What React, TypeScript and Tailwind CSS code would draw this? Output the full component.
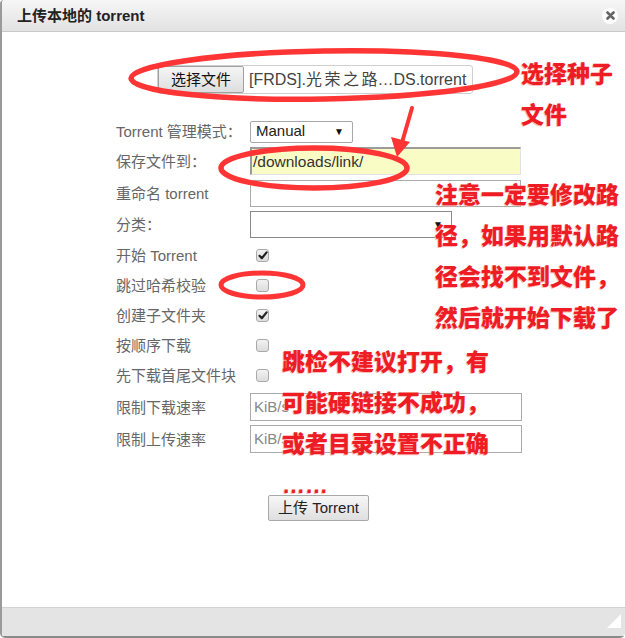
import React from "react";

const labelCls = "w-[134px] shrink-0 text-[15px] text-[#666] leading-none";
const redText =
  "absolute font-black text-[23px] leading-[41px] text-[#ee1c24] whitespace-nowrap [text-shadow:-1px_1px_0_rgba(255,170,170,0.8)]";

function Check({ checked }: { checked?: boolean }) {
  return (
    <div className="ml-[6px] w-[13px] h-[13px] rounded-[3px] border border-[#a9a9a9] bg-gradient-to-b from-[#f2f2f2] to-[#dcdcdc] flex items-center justify-center">
      {checked && (
        <svg width="10" height="9" viewBox="0 0 10 9">
          <path d="M1.5 4.8 L3.8 7.2 L8.6 1.4" stroke="#222" strokeWidth="2.2" fill="none" strokeLinecap="round" strokeLinejoin="round" />
        </svg>
      )}
    </div>
  );
}

function Row({ label, h, children }: { label: string; h: number; children?: React.ReactNode }) {
  return (
    <div className="flex items-center" style={{ height: h }}>
      <div className={labelCls}>{label}</div>
      {children}
    </div>
  );
}

export default function App() {
  return (
    <div
      className="relative w-[625px] h-[638px] flex flex-col border-l-2 border-[#9a9a9a] rounded-tl-[4px] rounded-b-[5px] overflow-hidden bg-white"
      style={{ fontFamily: '"Liberation Sans", Arial, "Noto Sans CJK SC", sans-serif' }}
    >
      {/* header */}
      <div className="h-[32px] shrink-0 flex items-center justify-between bg-gradient-to-b from-[#f6f6f6] to-[#e2e2e2] border-b border-[#c9c9c9] pl-[15px] pr-[7px]">
        <span className="text-[15px] font-semibold text-[#222] leading-none">上传本地的 torrent</span>
        <div className="w-[16px] h-[16px] rounded-full bg-white flex items-center justify-center">
          <svg width="9" height="9" viewBox="0 0 9 9">
            <path d="M1.5 1.5 L7.5 7.5 M7.5 1.5 L1.5 7.5" stroke="#666" strokeWidth="2.6" strokeLinecap="round" />
          </svg>
        </div>
      </div>

      {/* body */}
      <div className="flex-1 flex flex-col pt-[33px]">
        <div className="flex justify-center pl-[3px]">
          <div className="w-[316px] h-[29px] rounded-[3px] border border-[#cfcfcf] flex items-center">
            <div className="h-[27px] w-[86px] rounded-[2px] border border-[#a0a0a0] bg-gradient-to-b from-[#f5f5f5] to-[#dedede] flex items-center justify-center text-[15px] text-[#111]" style={{ fontFamily: '"Noto Sans CJK SC", sans-serif' }}>
              选择文件
            </div>
            <span className="ml-[5px] text-[16px] text-[#444] whitespace-nowrap">
              [FRDS].<span className="tracking-[2.5px]">光荣之</span>路…DS.torrent
            </span>
          </div>
        </div>

        <div className="mt-[24px] pl-[114px] flex flex-col" style={{ fontFamily: '"Liberation Sans", "Noto Sans CJK SC", sans-serif' }}>
          <Row label="Torrent 管理模式：" h={27}>
            <div className="w-[103px] h-[22px] border border-[#a8a8a8] rounded-[2px] bg-white flex items-center justify-between pl-[5px] pr-[8px]">
              <span className="text-[15px] text-[#222]">Manual</span>
              <span className="text-[10px] text-[#111]">▼</span>
            </div>
          </Row>
          <Row label="保存文件到：" h={32}>
            <div className="w-[271px] h-[28px] bg-[#fafcc6] border-t-2 border-l-2 border-[#9b9b9b] border-r border-b border-r-[#e2e2e2] border-b-[#e2e2e2] flex items-center pl-[1px]">
              <span className="text-[15.5px] text-[#333]">/downloads/link/</span>
            </div>
          </Row>
          <Row label="重命名 torrent" h={32}>
            <div className="w-[271px] h-[27px] border border-[#ababab] bg-white" />
          </Row>
          <Row label="分类：" h={31}>
            <div className="w-[202px] h-[27px] border border-[#8a8a8a] bg-white flex items-center justify-end pr-[8px]">
              <span className="text-[10px] text-[#111]">▼</span>
            </div>
          </Row>
          <Row label="开始 Torrent" h={30}><Check checked /></Row>
          <Row label="跳过哈希校验" h={30}><Check /></Row>
          <Row label="创建子文件夹" h={30}><Check checked /></Row>
          <Row label="按顺序下载" h={30}><Check /></Row>
          <Row label="先下载首尾文件块" h={30}><Check /></Row>
          <Row label="限制下载速率" h={34}>
            <div className="w-[272px] h-[28px] border border-[#ababab] bg-white flex items-center pl-[3px]">
              <span className="text-[15px] text-[#888]">KiB/s</span>
            </div>
          </Row>
          <Row label="限制上传速率" h={30}>
            <div className="w-[272px] h-[28px] border border-[#ababab] bg-white flex items-center pl-[3px]">
              <span className="text-[15px] text-[#888]">KiB/s</span>
            </div>
          </Row>
        </div>

        <div className="mt-[41px] pl-[266px]">
          <div className="w-[101px] h-[26px] rounded-[2px] border border-[#a8a8a8] bg-gradient-to-b from-[#f7f7f7] to-[#dfdfdf] flex items-center justify-center text-[15px] text-[#222]">
            上传 Torrent
          </div>
        </div>
      </div>

      {/* footer */}
      <div className="h-[29px] shrink-0 bg-[#e4e4e4] border-t border-[#d2d2d2] flex justify-end items-start pt-[6px] pr-[4px]">
        <svg width="14" height="14" viewBox="0 0 14 14">
          <polygon points="14,0 14,14 0,14" fill="#fff" />
        </svg>
      </div>
      <div className="h-[2px] shrink-0 bg-[#8a8a8a]" />

      {/* annotations */}
      <svg className="absolute left-[-2px] top-0 pointer-events-none" width="625" height="638" viewBox="0 0 625 638">
        <ellipse cx="324" cy="75" rx="193" ry="24" fill="none" stroke="#ff3535" strokeWidth="5.5" transform="rotate(-1 324 75)" />
        <ellipse cx="314" cy="168" rx="93" ry="20" fill="none" stroke="#ff3535" strokeWidth="5.5" />
        <ellipse cx="262" cy="285" rx="41" ry="12" fill="none" stroke="#ff3535" strokeWidth="5" />
        <path d="M412 108 L401 146" stroke="#ff3535" strokeWidth="4" strokeLinecap="round" />
        <polygon points="391,137 410,142 397,157" fill="#ff3535" />
      </svg>

      <div className={redText} style={{ left: 519, top: 54 }}>
        选择种子<br />文件
      </div>
      <div className={redText} style={{ left: 433, top: 175 }}>
        注意一定要修改路<br />径，如果用默认路<br />径会找不到文件，<br />然后就开始下载了
      </div>
      <div className={redText} style={{ left: 280, top: 342 }}>
        跳检不建议打开，有<br />可能硬链接不成功，<br />或者目录设置不正确<br />……
      </div>
    </div>
  );
}
